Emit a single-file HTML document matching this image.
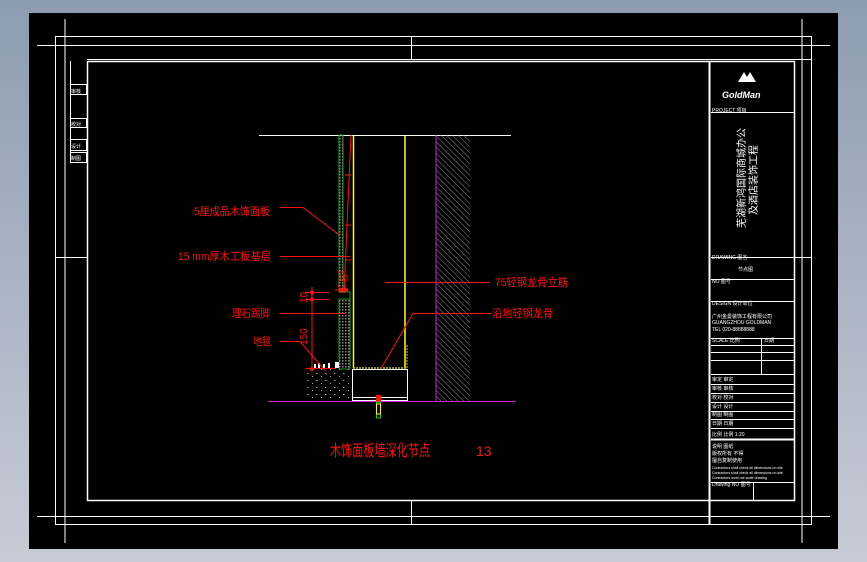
<!DOCTYPE html>
<html><head><meta charset="utf-8"><style>
html,body{margin:0;padding:0;width:867px;height:562px;overflow:hidden;background:linear-gradient(#8d9cb1,#c7cbd6);}
svg{position:absolute;left:0;top:0}
text{font-family:"Liberation Sans","Noto Sans CJK SC",sans-serif;}
</style></head><body>
<svg width="867" height="562" viewBox="0 0 867 562" xmlns="http://www.w3.org/2000/svg">
<defs>
<pattern id="h" width="4" height="4" patternUnits="userSpaceOnUse" patternTransform="rotate(-45)">
<line x1="0" y1="0" x2="0" y2="4" stroke="#8a8a8a" stroke-width="1"/></pattern>
<pattern id="d" width="3" height="3" patternUnits="userSpaceOnUse">
<rect width="1.5" height="1.5" fill="#888"/></pattern>
<pattern id="c" width="9" height="7" patternUnits="userSpaceOnUse">
<rect x="1" y="2" width="1.5" height="1" fill="#999"/><rect x="6" y="5" width="1" height="1" fill="#aaa"/></pattern>
</defs>
<rect x="29" y="13" width="809" height="536" fill="#000"/>
<g stroke="#fff" stroke-width="1" fill="none">
<line x1="65" y1="19" x2="65" y2="543"/><line x1="802" y1="19" x2="802" y2="543"/>
<line x1="37" y1="45.5" x2="830" y2="45.5"/><line x1="37" y1="516.5" x2="830" y2="516.5"/>
<rect x="55.5" y="36.5" width="756" height="488"/>
<line x1="411.5" y1="36" x2="411.5" y2="60"/><line x1="411.5" y1="501" x2="411.5" y2="525"/>
<line x1="55" y1="257.5" x2="88" y2="257.5"/><line x1="795" y1="257.5" x2="812" y2="257.5"/>
<rect x="87.5" y="61.5" width="707" height="439" stroke-width="1.5"/>
<line x1="87" y1="59.5" x2="812" y2="59.5"/>
<line x1="709.5" y1="61" x2="709.5" y2="525" stroke-width="2"/>
<line x1="70.5" y1="61" x2="70.5" y2="163"/>
<rect x="70.5" y="84.5" width="16" height="10"/><rect x="70.5" y="118.5" width="16" height="9"/>
<rect x="70.5" y="139.5" width="16" height="11"/><rect x="70.5" y="152.5" width="16" height="10"/>
<line x1="711" y1="112.5" x2="795" y2="112.5"/><line x1="711" y1="257.5" x2="795" y2="257.5"/>
<line x1="711" y1="279.5" x2="795" y2="279.5"/><line x1="711" y1="301.5" x2="795" y2="301.5"/>
<line x1="711" y1="338.5" x2="795" y2="338.5"/><line x1="711" y1="345.5" x2="795" y2="345.5"/>
<line x1="711" y1="352.5" x2="795" y2="352.5"/><line x1="711" y1="360.5" x2="795" y2="360.5"/>
<line x1="711" y1="374.5" x2="795" y2="374.5"/><line x1="711" y1="384.5" x2="795" y2="384.5"/>
<line x1="711" y1="393.5" x2="795" y2="393.5"/><line x1="711" y1="402.5" x2="795" y2="402.5"/>
<line x1="711" y1="411.5" x2="795" y2="411.5"/><line x1="711" y1="419.5" x2="795" y2="419.5"/>
<line x1="711" y1="428.5" x2="795" y2="428.5"/><line x1="711" y1="439.5" x2="795" y2="439.5" stroke-width="2"/>
<line x1="711" y1="482.5" x2="795" y2="482.5"/>
<line x1="761.5" y1="338" x2="761.5" y2="374"/><line x1="753.5" y1="482" x2="753.5" y2="500"/>
</g>
<g fill="#fff" font-size="5">
<text x="71" y="93">审核</text><text x="71" y="126">校对</text><text x="71" y="148">设计</text><text x="71" y="160">制图</text>
<text x="722" y="98" font-size="9" font-style="italic" font-weight="bold">GoldMan</text>
<path d="M738 82 l6 -10 l6 10 z M744 82 l6 -10 l6 10z" fill="#fff"/>
<text x="712" y="112">PROJECT 项目</text>
<text x="712" y="259">DRAWING 图名</text><text x="738" y="271">节点图</text>
<text x="712" y="283">NO 图号</text><text x="712" y="305">DESIGN 设计单位</text>
<text x="712" y="318">广州金曼装饰工程有限公司</text><text x="712" y="324">GUANGZHOU GOLDMAN</text><text x="712" y="331">TEL 020-88888888</text>
<text x="712" y="342">SCALE 比例</text><text x="764" y="342">日期</text>
<text x="712" y="381">审定 审定</text><text x="712" y="390">审核 审核</text><text x="712" y="399">校对 校对</text>
<text x="712" y="408">设计 设计</text><text x="712" y="416">制图 制图</text><text x="712" y="425">日期 日期</text><text x="712" y="436">比例 比例 1:20</text>
<text x="712" y="448">说明 图纸</text><text x="712" y="455">版权所有 不得</text><text x="712" y="462">擅自复制使用</text>
<text x="712" y="469" font-size="3.5">Contractors shall check all dimensions on site</text>
<text x="712" y="474" font-size="3.5">Contractors shall check all dimensions on site</text>
<text x="712" y="479" font-size="3.5">Contractors must not scale drawing</text>
<text x="712" y="486">Drawing NO 图号</text>
</g>
<g fill="#fff" font-size="10">
<text transform="translate(745 228) rotate(-90)">芜湖新鸿国际商城办公</text>
<text transform="translate(757 215) rotate(-90)">及酒店装饰工程</text>
</g>
<!-- drawing -->
<line x1="259" y1="135.5" x2="511" y2="135.5" stroke="#fff"/>
<rect x="436" y="135" width="34" height="266" fill="url(#h)"/>
<line x1="436" y1="135" x2="436" y2="401" stroke="#d020d0"/>
<line x1="268" y1="401.5" x2="515" y2="401.5" stroke="#d020d0"/>
<rect x="339" y="135" width="4" height="157" fill="url(#d)" stroke="#20c020" stroke-width="0.8"/>
<path d="M343 292 h7 v7 h-11 v70 h11 v-77" fill="url(#d)" stroke="#20c020" stroke-width="0.8"/>
<line x1="353.5" y1="135" x2="353.5" y2="368" stroke="#ffff00" stroke-width="1.5"/>
<line x1="405" y1="135" x2="405" y2="368" stroke="#ffff00" stroke-width="1.5"/>
<line x1="353" y1="368" x2="407" y2="368" stroke="#c0c020" stroke-dasharray="2 1" stroke-width="1.5"/>
<line x1="407" y1="345" x2="407" y2="368" stroke="#c0c020" stroke-dasharray="2 1"/>
<rect x="305" y="369" width="47" height="32" fill="url(#c)"/>
<rect x="352.5" y="369.5" width="55" height="31" fill="none" stroke="#fff"/>
<line x1="352" y1="397.5" x2="408" y2="397.5" stroke="#fff"/>
<path d="M314 368 v-4 h2 v4 h2 v-5 h2 v5 h3 v-4 h2 v4 h3 v-5 h2 v5 h5 v-6 h4 v6z" fill="#fff"/>
<g stroke="#ff1010" fill="none" stroke-width="1">
<path d="M351 135 L344 293 M351 175 h-6 M351 225 h-6 M351 260 h-5"/>
<path d="M280 207.5 h23 l37 28"/><line x1="280" y1="256.5" x2="350" y2="256.5"/>
<line x1="280" y1="313.5" x2="345" y2="313.5"/>
<path d="M280 341.5 h20 l25 29"/>
<line x1="385" y1="282.5" x2="490" y2="282.5"/>
<path d="M492 313.5 h-79 l-32 55"/>
<line x1="312" y1="287" x2="312" y2="370"/>
<path d="M305 292.5 h24 M305 299.5 h24 M306 368.5 h30 M335 290 h12 M338 272 h6 M338 285 l3 8 M346 285 l-3 8"/>
</g>
<g fill="#ff1010"><circle cx="312" cy="292.5" r="2"/><circle cx="312" cy="299.5" r="2"/><circle cx="312" cy="369" r="2"/>
<circle cx="341" cy="290" r="2"/><circle cx="346" cy="290" r="2"/></g>
<rect x="376" y="395" width="5" height="7" fill="#ff1010"/>
<rect x="376.5" y="402" width="4" height="16" fill="none" stroke="#20c020"/>
<rect x="376.5" y="404" width="4" height="10" fill="none" stroke="#ffff00"/>
<g fill="#ff1010" font-size="11">
<text x="194" y="215" textLength="76" lengthAdjust="spacingAndGlyphs">5厘成品木饰面板</text>
<text x="178" y="260" textLength="93" lengthAdjust="spacingAndGlyphs">15 mm厚木工板基层</text>
<text x="232" y="317" textLength="38" lengthAdjust="spacingAndGlyphs">理石踢脚</text>
<text x="253" y="345" textLength="18" lengthAdjust="spacingAndGlyphs">地毯</text>
<text x="495" y="286" textLength="73" lengthAdjust="spacingAndGlyphs">75轻钢龙骨立筋</text>
<text x="492" y="317" textLength="61" lengthAdjust="spacingAndGlyphs">沿地轻钢龙骨</text>
<text transform="translate(307 303) rotate(-90)" font-size="10">10</text>
<text transform="translate(307 345) rotate(-90)" font-size="10">150</text>
<text x="338" y="281" font-size="9">10</text>
<text x="330" y="456" font-size="16" textLength="100" lengthAdjust="spacingAndGlyphs">木饰面板墙深化节点</text>
<text x="476" y="456" font-size="14">13</text>
</g>
</svg>
</body></html>
